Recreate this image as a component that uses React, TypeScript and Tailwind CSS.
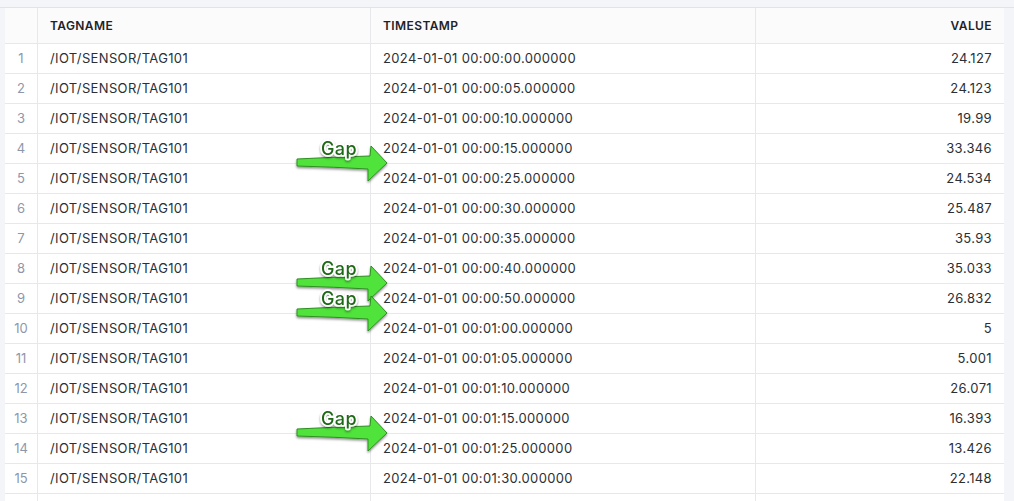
import React from 'react';

const rows: [string, string][] = [
  ['00:00:00', '24.127'],
  ['00:00:05', '24.123'],
  ['00:00:10', '19.99'],
  ['00:00:15', '33.346'],
  ['00:00:25', '24.534'],
  ['00:00:30', '25.487'],
  ['00:00:35', '35.93'],
  ['00:00:40', '35.033'],
  ['00:00:50', '26.832'],
  ['00:01:00', '5'],
  ['00:01:05', '5.001'],
  ['00:01:10', '26.071'],
  ['00:01:15', '16.393'],
  ['00:01:25', '13.426'],
  ['00:01:30', '22.148'],
];

// y of the row boundary each arrow points at
const gaps = [163, 283, 313, 433];

const GapArrow = ({ y }: { y: number }) => (
  <g>
    <path
      d={`M297 ${y - 4} Q335 ${y - 6} 370 ${y - 7} L371 ${y - 17} L387 ${y} L368 ${y + 18} L368 ${y + 6} Q335 ${y + 4} 297 ${y + 3} Z`}
      fill="#4fe33a"
      stroke="#2f8f22"
      strokeWidth="1"
      strokeLinejoin="round"
      filter="url(#shadow)"
    />
    <text
      x="339"
      y={y - 8}
      textAnchor="middle"
      fontSize="18"
      fontWeight="500"
      fontFamily="Inter, 'Liberation Sans', sans-serif"
      fill="#1f6a18"
      stroke="#ffffff"
      strokeWidth="3.5"
      strokeLinejoin="round"
      paintOrder="stroke"
      filter="url(#shadow)"
    >
      Gap
    </text>
  </g>
);

export default function App() {
  return (
    <div className="relative h-[501px] w-[1014px] overflow-hidden bg-[#f4f5f8] font-['Inter','Liberation_Sans',sans-serif] text-[13px] tracking-[0.35px] text-[#2b2f36]">
      <div className="h-[8px] border-b border-[#dfe3eb]" />
      <div className="ml-[5px] w-[999px] bg-white">
        <div className="flex h-[36px] border-b border-[#e6e8ec] bg-[#fbfbfc] text-[12px] font-semibold tracking-[0.4px] text-[#1f2329]">
          <div className="w-[33px] border-r border-[#e6e8ec]" />
          <div className="flex w-[333px] items-center border-r border-[#e6e8ec] pl-[12px]">TAGNAME</div>
          <div className="flex w-[385px] items-center border-r border-[#e6e8ec] pl-[12px]">TIMESTAMP</div>
          <div className="flex flex-1 items-center justify-end pr-[12px]">VALUE</div>
        </div>
        {rows.map(([t, v], i) => (
          <div key={i} className="flex h-[30px] border-b border-[#e6e8ec]">
            <div className="flex w-[33px] items-center justify-center border-r border-[#e6e8ec] tracking-normal text-[#8e97aa]">
              {i + 1}
            </div>
            <div className="flex w-[333px] items-center border-r border-[#e6e8ec] pl-[12px]">/IOT/SENSOR/TAG101</div>
            <div className="flex w-[385px] items-center border-r border-[#e6e8ec] pl-[12px]">2024-01-01 {t}.000000</div>
            <div className="flex flex-1 items-center justify-end pr-[12px]">{v}</div>
          </div>
        ))}
        <div className="flex h-[30px]">
          <div className="w-[33px] border-r border-[#e6e8ec]" />
          <div className="w-[333px] border-r border-[#e6e8ec]" />
          <div className="w-[385px] border-r border-[#e6e8ec]" />
          <div className="flex-1" />
        </div>
      </div>
      <svg className="pointer-events-none absolute left-0 top-0" width="1014" height="501">
        <defs>
          <filter id="shadow" x="-20%" y="-40%" width="140%" height="180%">
            <feDropShadow dx="0" dy="1.5" stdDeviation="1" floodColor="#000" floodOpacity="0.45" />
          </filter>
        </defs>
        {gaps.map((y) => (
          <GapArrow key={y} y={y} />
        ))}
      </svg>
    </div>
  );
}
